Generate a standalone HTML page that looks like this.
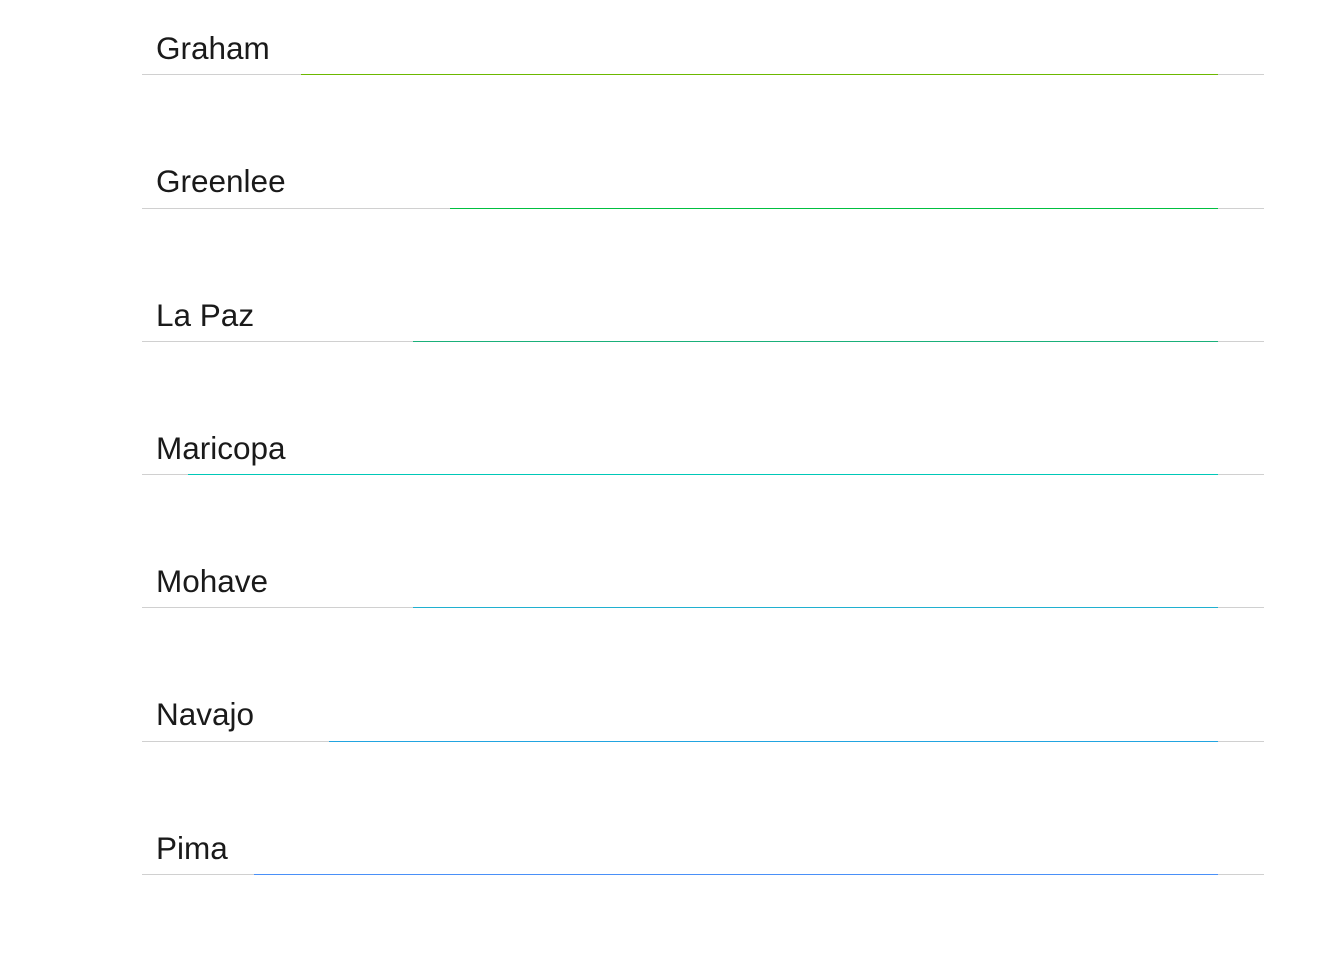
<!DOCTYPE html><html><head><style>
body{margin:0;background:#fff;width:1344px;height:960px;position:relative;font-family:"Liberation Sans",sans-serif}
.r{position:absolute;left:142px;width:1122px;height:1px;background:#d0d0d0}
.c{position:absolute;height:1px;right:126px}
.t{position:absolute;left:156px;font-size:31.5px;color:#1a1a1a;line-height:1}
</style></head><body>
<div class="t" style="top:33px">Graham</div><div class="r" style="top:74px"></div><div class="c" style="top:74px;left:301px;background:#6cb800"></div>
<div class="t" style="top:166px">Greenlee</div><div class="r" style="top:208px"></div><div class="c" style="top:208px;left:450px;background:#00c040"></div>
<div class="t" style="top:300px">La Paz</div><div class="r" style="top:341px"></div><div class="c" style="top:341px;left:413px;background:#1ab07a"></div>
<div class="t" style="top:433px">Maricopa</div><div class="r" style="top:474px"></div><div class="c" style="top:474px;left:188px;background:#00c8b8"></div>
<div class="t" style="top:566px">Mohave</div><div class="r" style="top:607px"></div><div class="c" style="top:607px;left:413px;background:#20b0d0"></div>
<div class="t" style="top:699px">Navajo</div><div class="r" style="top:741px"></div><div class="c" style="top:741px;left:329px;background:#22a4e0"></div>
<div class="t" style="top:833px">Pima</div><div class="r" style="top:874px"></div><div class="c" style="top:874px;left:254px;background:#4a90f8"></div>
</body></html>
